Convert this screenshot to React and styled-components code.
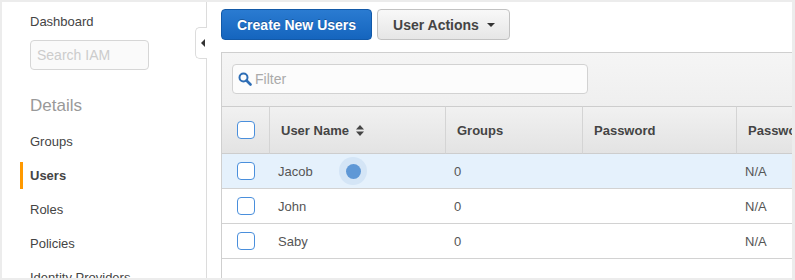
import React from "react";
import styled, { createGlobalStyle } from "styled-components";

const GlobalStyle = createGlobalStyle`
  html, body {
    margin: 0;
    padding: 0;
    background: #ececec;
    font-family: "Liberation Sans", Arial, sans-serif;
    color: #444;
  }
`;

const Frame = styled.div`
  padding: 2px 3px 2px 2px;
  height: 280px;
  box-sizing: border-box;
`;

const Page = styled.div`
  display: flex;
  height: 276px;
  background: #fff;
  overflow: hidden;
`;

const Sidebar = styled.nav`
  position: relative;
  flex: 0 0 205px;
  border-right: 1px solid #dcdcdc;
  padding-top: 8px;
  box-sizing: border-box;
  font-size: 13px;
`;

const SideLink = styled.div`
  height: 24px;
  line-height: 24px;
  padding-left: 28px;
  color: #444;
`;

const SearchBox = styled.div`
  margin: 6px 0 0 28px;
  width: 119px;
  height: 30px;
  box-sizing: border-box;
  border: 1px solid #d6d6d6;
  border-radius: 4px;
  background: #fafafa;
  color: #ccc;
  font-size: 14px;
  line-height: 28px;
  padding-left: 6px;
`;

const SectionTitle = styled.div`
  margin: 24px 0 0 28px;
  font-size: 17px;
  color: #999;
  height: 24px;
  line-height: 24px;
`;

const NavList = styled.div`
  margin-top: 10px;
  display: flex;
  flex-direction: column;
  gap: 7px;
`;

const NavItem = styled.div`
  margin-left: 18px;
  height: 27px;
  line-height: 27px;
  padding-left: ${(p) => (p.$active ? "7px" : "10px")};
  border-left: ${(p) => (p.$active ? "3px solid #f90" : "none")};
  font-weight: ${(p) => (p.$active ? "bold" : "normal")};
  color: #444;
  white-space: nowrap;
`;

const CollapseTab = styled.div`
  position: absolute;
  top: 25px;
  right: -1px;
  width: 12px;
  height: 32px;
  box-sizing: border-box;
  border: 1px solid #dcdcdc;
  border-right: none;
  border-radius: 5px 0 0 5px;
  background: #fff;
  display: flex;
  align-items: center;
  justify-content: center;

  &::after {
    content: "";
    border-style: solid;
    border-width: 4px 4px 4px 0;
    border-color: transparent #333 transparent transparent;
    margin-left: 2px;
  }
`;

const Main = styled.main`
  flex: 1;
  min-width: 0;
  padding-left: 14px;
  display: flex;
  flex-direction: column;
`;

const Toolbar = styled.div`
  display: flex;
  gap: 5px;
  padding-top: 7px;
  height: 50px;
  box-sizing: border-box;
`;

const Button = styled.button`
  height: 31px;
  border-radius: 4px;
  font-family: inherit;
  font-size: 14px;
  font-weight: bold;
  padding: ${(p) => (p.$primary ? "0 15px" : "0 14px 0 15px")};
  display: flex;
  align-items: center;
  gap: 8px;
  border: 1px solid ${(p) => (p.$primary ? "#1259a8" : "#c2c2c2")};
  color: ${(p) => (p.$primary ? "#fff" : "#444")};
  background: ${(p) =>
    p.$primary
      ? "linear-gradient(#2a7bd1, #1565be)"
      : "linear-gradient(#f8f8f8, #e6e6e6)"};
  text-shadow: ${(p) => (p.$primary ? "0 -1px 0 rgba(0,0,0,0.25)" : "none")};
`;

const Caret = styled.span`
  border-style: solid;
  border-width: 4px 4px 0 4px;
  border-color: #333 transparent transparent transparent;
`;

const Panel = styled.div`
  width: 620px;
  border-left: 1px solid #cfcfcf;
  border-top: 1px solid #cfcfcf;
  flex: 1;
`;

const FilterBar = styled.div`
  background: linear-gradient(#f5f5f5, #efefef);
  height: 53px;
  padding: 11px 0 0 10px;
  box-sizing: border-box;
`;

const FilterInput = styled.div`
  width: 356px;
  height: 30px;
  box-sizing: border-box;
  border: 1px solid #d2d2d2;
  border-radius: 4px;
  background: #fcfcfc;
  display: flex;
  align-items: center;
  gap: 3px;
  padding-left: 5px;
  color: #aaa;
  font-size: 14px;
`;

const Table = styled.div`
  display: grid;
  grid-template-columns: 47px 176px 137px 154px 120px;
`;

const HeadCell = styled.div`
  height: 48px;
  box-sizing: border-box;
  border-top: 1px solid #cdcdcd;
  border-bottom: 1px solid #cdcdcd;
  border-left: ${(p) => (p.$first ? "none" : "1px solid #d4d4d4")};
  background: linear-gradient(#f1f1f1, #e3e3e3);
  display: flex;
  align-items: center;
  justify-content: ${(p) => (p.$center ? "center" : "flex-start")};
  padding-left: ${(p) => (p.$center ? "0" : "11px")};
  font-size: 13px;
  font-weight: bold;
  color: #444;
  white-space: nowrap;
  gap: 7px;
`;

const Cell = styled.div`
  position: relative;
  height: 35px;
  box-sizing: border-box;
  border-bottom: 1px solid #d2d2d2;
  background: ${(p) => (p.$selected ? "#e5f1fc" : "#fff")};
  display: flex;
  align-items: center;
  justify-content: ${(p) => (p.$center ? "center" : "flex-start")};
  padding-left: ${(p) => (p.$center ? "0" : "9px")};
  font-size: 13px;
  color: #555;
  white-space: nowrap;
`;

const Check = styled.span`
  width: 18px;
  height: 18px;
  box-sizing: border-box;
  border: 1.5px solid #4a8fdc;
  border-radius: 4px;
  background: #fff;
`;

const TouchDot = styled.span`
  position: absolute;
  left: 70px;
  top: 3px;
  width: 28px;
  height: 28px;
  border-radius: 50%;
  background: #d4e5f6;
  display: flex;
  align-items: center;
  justify-content: center;

  &::after {
    content: "";
    width: 15px;
    height: 15px;
    border-radius: 50%;
    background: #5f98d6;
  }
`;

const SearchIcon = () => (
  <svg width="14" height="14" viewBox="0 0 14 14">
    <circle cx="5.5" cy="5.5" r="4" fill="none" stroke="#2d6db5" strokeWidth="2" />
    <line x1="8.5" y1="8.5" x2="12.5" y2="12.5" stroke="#2d6db5" strokeWidth="2.6" strokeLinecap="round" />
  </svg>
);

const SortIcon = () => (
  <svg width="8" height="11" viewBox="0 0 8 11">
    <path d="M4 0 L8 4.5 L0 4.5 Z" fill="#444" />
    <path d="M4 11 L8 6.5 L0 6.5 Z" fill="#444" />
  </svg>
);

const users = [
  { name: "Jacob", groups: "0", selected: true, touch: true },
  { name: "John", groups: "0" },
  { name: "Saby", groups: "0" },
];

export default function App() {
  return (
    <>
      <GlobalStyle />
      <Frame>
        <Page>
          <Sidebar>
            <SideLink>Dashboard</SideLink>
            <SearchBox>Search IAM</SearchBox>
            <SectionTitle>Details</SectionTitle>
            <NavList>
              <NavItem>Groups</NavItem>
              <NavItem $active>Users</NavItem>
              <NavItem>Roles</NavItem>
              <NavItem>Policies</NavItem>
              <NavItem>Identity Providers</NavItem>
            </NavList>
            <CollapseTab />
          </Sidebar>
          <Main>
            <Toolbar>
              <Button $primary>Create New Users</Button>
              <Button>
                User Actions <Caret />
              </Button>
            </Toolbar>
            <Panel>
              <FilterBar>
                <FilterInput>
                  <SearchIcon />
                  Filter
                </FilterInput>
              </FilterBar>
              <Table>
                <HeadCell $first $center>
                  <Check />
                </HeadCell>
                <HeadCell>
                  User Name <SortIcon />
                </HeadCell>
                <HeadCell>Groups</HeadCell>
                <HeadCell>Password</HeadCell>
                <HeadCell>Password Last Used</HeadCell>
                {users.map((u) => (
                  <React.Fragment key={u.name}>
                    <Cell $center $selected={u.selected}>
                      <Check />
                    </Cell>
                    <Cell $selected={u.selected}>
                      {u.name}
                      {u.touch && <TouchDot />}
                    </Cell>
                    <Cell $selected={u.selected}>{u.groups}</Cell>
                    <Cell $selected={u.selected} />
                    <Cell $selected={u.selected}>N/A</Cell>
                  </React.Fragment>
                ))}
              </Table>
            </Panel>
          </Main>
        </Page>
      </Frame>
    </>
  );
}
